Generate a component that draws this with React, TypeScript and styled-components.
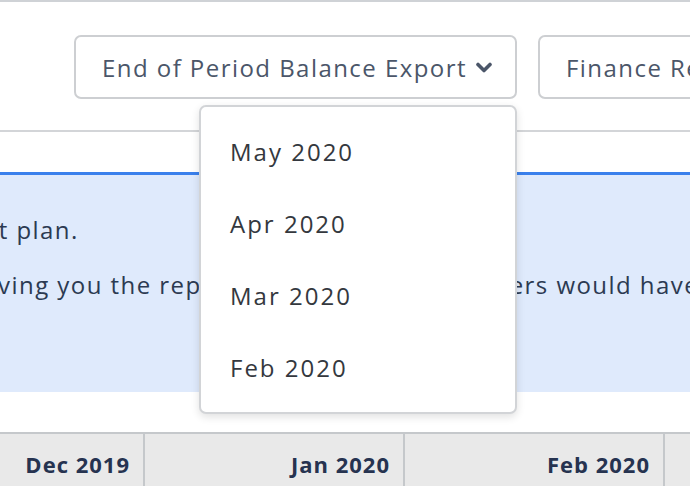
import React from "react";
import styled, { createGlobalStyle } from "styled-components";

const Global = createGlobalStyle`
  html, body { margin: 0; padding: 0; background: #ffffff; overflow: hidden; }
  body { font-family: "Open Sans", Lato, sans-serif; width: 690px; height: 486px; }
`;

const Page = styled.div`
  width: 690px;
  height: 486px;
  overflow: hidden;
  border-top: 2px solid #cfd2d6;
  box-sizing: border-box;
  display: flex;
  flex-direction: column;
`;

const Toolbar = styled.div`
  display: flex;
  align-items: flex-start;
  gap: 21px;
  padding: 33px 0 0 74px;
  height: 130px;
  flex: none;
  box-sizing: border-box;
  border-bottom: 2px solid #d3d5d8;
  white-space: nowrap;
`;

const MenuAnchor = styled.div`
  position: relative;
  flex: none;
`;

const Button = styled.button<{ $width: number }>`
  display: flex;
  align-items: center;
  gap: 9px;
  width: ${(p) => p.$width}px;
  height: 64px;
  padding: 0 0 0 26px;
  box-sizing: border-box;
  background: #ffffff;
  border: 2px solid #cdcfd2;
  border-radius: 7px;
  font-family: "Open Sans", Lato, sans-serif;
  font-size: 24px;
  letter-spacing: 1.45px;
  color: #4b5669;
  cursor: pointer;
  flex: none;
`;

const Chevron = styled.svg`
  width: 16px;
  height: 12px;
  margin-top: 2px;
`;

const Menu = styled.ul`
  position: absolute;
  top: 70px;
  right: 0;
  width: 318px;
  height: 309px;
  box-sizing: border-box;
  margin: 0;
  padding: 8px 0 0 0;
  list-style: none;
  background: #ffffff;
  border: 2px solid #d2d4d7;
  border-radius: 7px;
  box-shadow: 0 3px 8px rgba(0, 0, 0, 0.12);
  z-index: 10;
`;

const MenuItem = styled.li`
  height: 72px;
  display: flex;
  align-items: center;
  padding-left: 29px;
  font-size: 24px;
  letter-spacing: 2px;
  color: #34383e;
`;

const Notice = styled.div`
  margin-top: 40px;
  height: 220px;
  flex: none;
  box-sizing: border-box;
  border-top: 3px solid #3a80ec;
  background: #dfeafc;
  padding-top: 37px;
  white-space: nowrap;
  overflow: hidden;
`;

const NoticeText = styled.div`
  margin-left: -228px;
`;

const NoticeLine = styled.p`
  margin: 0 0 19px 0;
  font-size: 24px;
  letter-spacing: 1.45px;
  line-height: 36px;
  color: #2c3a52;
`;

const HeaderRow = styled.div`
  margin-top: 40px;
  flex: none;
  display: grid;
  grid-template-columns: 145px 260px 260px 1fr;
  border-top: 2px solid #c5c8cb;
  background: #e9e9e9;
  height: 60px;
`;

const HeaderCell = styled.div`
  display: flex;
  align-items: center;
  justify-content: flex-end;
  padding-right: 13px;
  border-right: 2px solid #c5c8cb;
  font-size: 22px;
  letter-spacing: 1px;
  font-weight: 700;
  color: #263350;
  &:last-child { border-right: none; }
`;

export default function App() {
  const months = ["May 2020", "Apr 2020", "Mar 2020", "Feb 2020"];
  return (
    <>
      <Global />
      <Page>
        <Toolbar>
          <MenuAnchor>
            <Button $width={443}>
              End of Period Balance Export
              <Chevron viewBox="0 0 16 12">
                <polyline
                  points="2,2.5 8,8.5 14,2.5"
                  fill="none"
                  stroke="#4b5669"
                  strokeWidth="3.6"
                  strokeLinecap="round"
                  strokeLinejoin="round"
                />
              </Chevron>
            </Button>
            <Menu>
              {months.map((m) => (
                <MenuItem key={m}>{m}</MenuItem>
              ))}
            </Menu>
          </MenuAnchor>
          <Button $width={300}>Finance Reports</Button>
        </Toolbar>
        <Notice>
          <NoticeText>
            <NoticeLine>You're on the Start plan.</NoticeLine>
            <NoticeLine>This free trial is giving you the reports that our paid members would have</NoticeLine>
          </NoticeText>
        </Notice>
        <HeaderRow>
          <HeaderCell>Dec 2019</HeaderCell>
          <HeaderCell>Jan 2020</HeaderCell>
          <HeaderCell>Feb 2020</HeaderCell>
          <HeaderCell />
        </HeaderRow>
      </Page>
    </>
  );
}
